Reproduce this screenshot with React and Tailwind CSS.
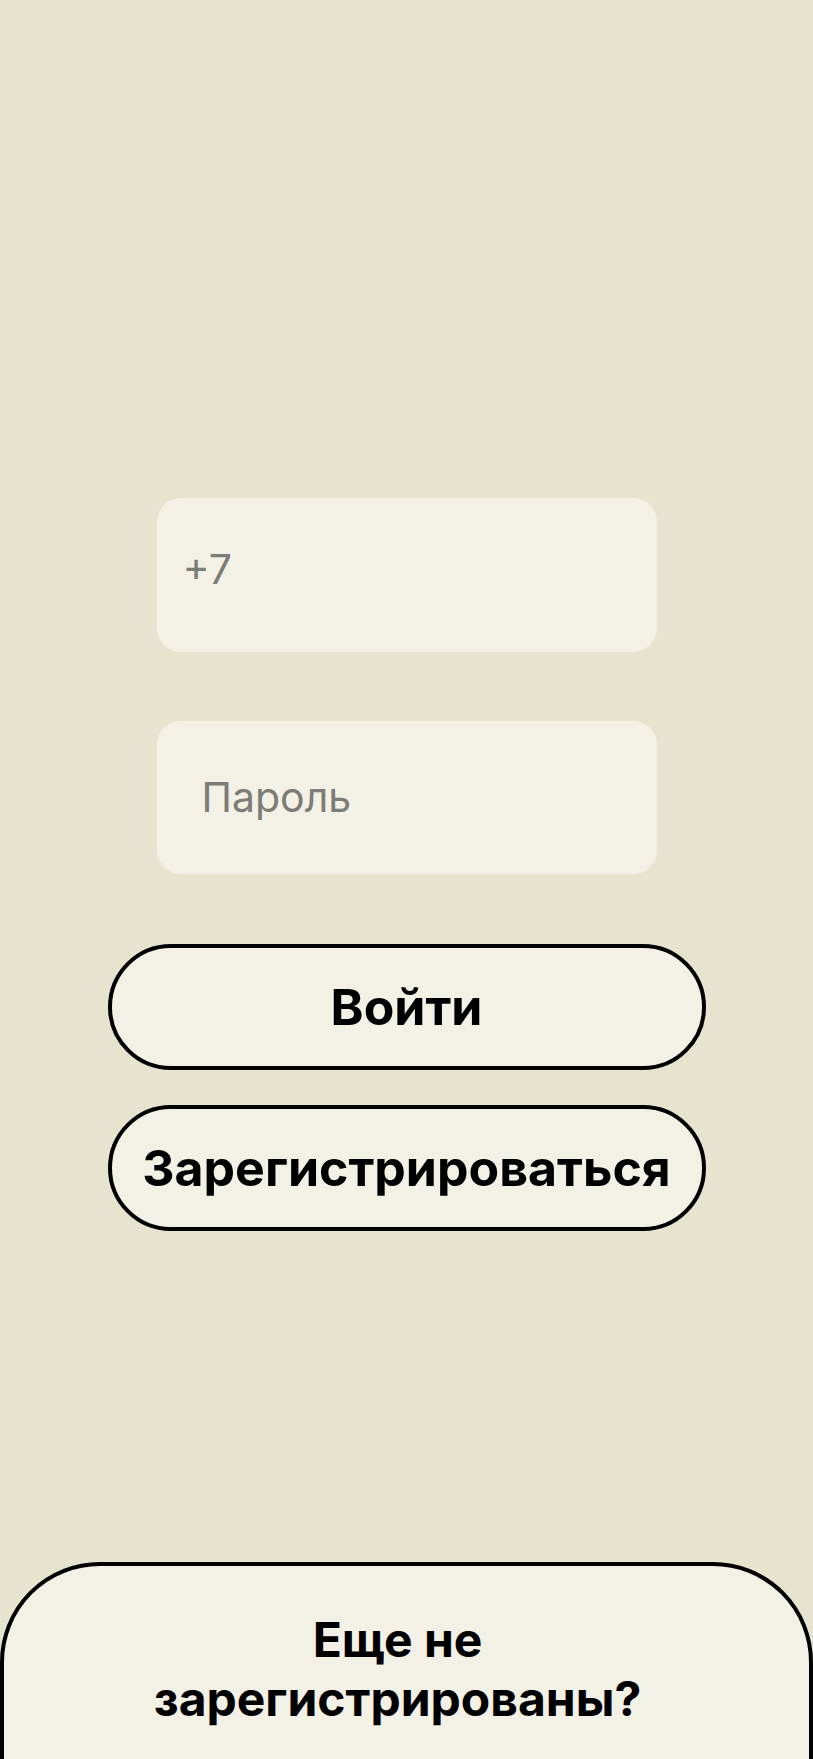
export default function App() {
  return (
    <div className="h-[1759px] w-full overflow-hidden bg-[#e6e4cf] flex flex-col items-center">
      <div className="pt-[498px] flex flex-col items-center">
        {/* Phone */}
        <div className="w-[500px] h-[154px] rounded-3xl bg-[#f3f1e5] flex items-center pl-[26px] pb-[10px]">
          <span className="font-['Inter',sans-serif] text-[41px] text-[#7b7c76]">+7</span>
        </div>

        {/* Password */}
        <div className="mt-[69px] w-[500px] h-[153px] rounded-3xl bg-[#f3f1e5] flex items-center pl-[45px]">
          <span className="font-['Inter',sans-serif] text-[41px] text-[#7b7c76]">Пароль</span>
        </div>

        {/* Buttons */}
        <button className="mt-[70px] w-[598px] h-[126px] rounded-full border-4 border-black bg-[#f3f1e5] font-['Inter',sans-serif] font-bold text-[50px] text-black">
          Войти
        </button>
        <button className="mt-[35px] w-[598px] h-[126px] rounded-full border-4 border-black bg-[#f3f1e5] font-['Inter',sans-serif] font-bold text-[50px] text-black">
          Зарегистрироваться
        </button>
      </div>

      {/* Bottom sheet */}
      <div className="mt-[331px] w-full h-[260px] shrink-0 rounded-t-[100px] border-4 border-black bg-[#f3f1e5] flex flex-col items-center pt-[44px] pr-[18px]">
        <p className="font-['Inter',sans-serif] font-bold text-[48px] leading-[59px] text-black text-center">
          Еще не
          <br />
          зарегистрированы?
        </p>
      </div>
    </div>
  )
}
